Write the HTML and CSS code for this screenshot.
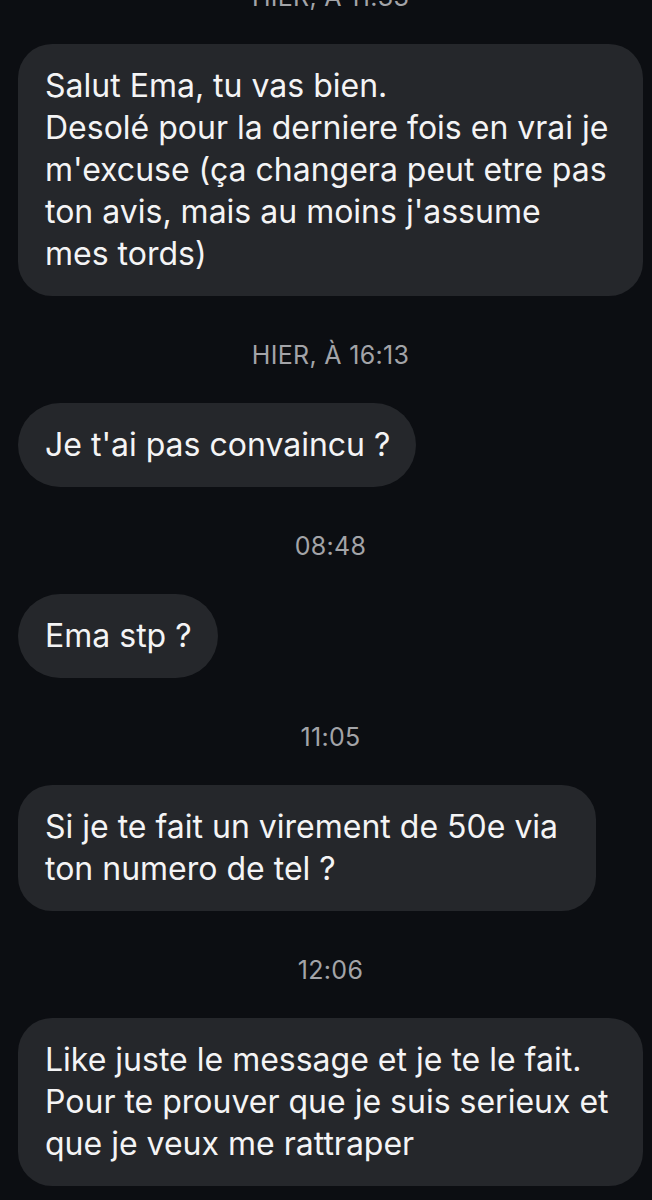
FILE: index.html
```html
<!DOCTYPE html>
<html lang="fr">
<head>
<meta charset="utf-8">
<link rel="stylesheet" href="styles.css">
</head>
<body>
<div class="chat">
  <div class="ts ts-first">HIER, À 11:33</div>
  <div class="bubble wide">Salut Ema, tu vas bien.<br>Desolé pour la derniere fois en vrai je<br>m'excuse (ça changera peut etre pas<br>ton avis, mais au moins j'assume<br>mes tords)</div>
  <div class="ts">HIER, À 16:13</div>
  <div class="bubble pill">Je t'ai pas convaincu ?</div>
  <div class="ts">08:48</div>
  <div class="bubble pill">Ema stp ?</div>
  <div class="ts">11:05</div>
  <div class="bubble roomy">Si je te fait un virement de 50e via<br>ton numero de tel ?</div>
  <div class="ts">12:06</div>
  <div class="bubble wide">Like juste le message et je te le fait.<br>Pour te prouver que je suis serieux et<br>que je veux me rattraper</div>
</div>
</body>
</html>
```

FILE: styles.css
```css
html, body {
  margin: 0;
  padding: 0;
  background: #0c0e12;
}
body {
  font-family: Inter, "Noto Sans", sans-serif;
  -webkit-font-smoothing: antialiased;
  overflow: hidden;
  height: 1200px;
}
.chat {
  display: flex;
  flex-direction: column;
  align-items: flex-start;
  padding: 0 9px 0 18px;
}
.ts {
  align-self: stretch;
  text-align: center;
  color: #a3a4a8;
  font-size: 25px;
  letter-spacing: 0.3px;
  line-height: 30px;
  margin: 44px 0 33px;
}
.ts-first {
  margin-top: -18px;
  margin-bottom: 32px;
}
.bubble {
  background: #25272b;
  color: #f4f4f5;
  font-size: 32px;
  letter-spacing: 0;
  line-height: 42px;
  padding: 21px 30px 21px 27px;
  border-radius: 34px;
  white-space: nowrap;
}
.wide {
  align-self: stretch;
}
.pill {
  border-radius: 42px;
  padding-right: 26px;
}
.roomy {
  padding-right: 38px;
}
```
